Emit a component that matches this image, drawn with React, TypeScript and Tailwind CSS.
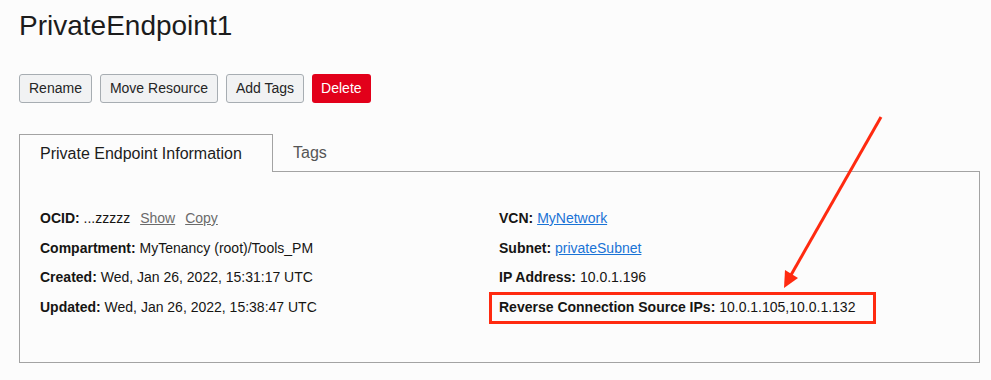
const font = { fontFamily: '"Liberation Sans", Arial, sans-serif' };

function Field({ label, children }: { label: string; children: React.ReactNode }) {
  return (
    <div className="h-[29.5px] leading-[29.5px] whitespace-nowrap">
      <span className="font-bold">{label}</span> {children}
    </div>
  );
}

export default function App() {
  return (
    <div className="relative h-[380px] w-[991px] overflow-hidden bg-[#fcfcfc] text-[#161513]" style={font}>
      <div className="pl-[19px] pr-[11px] pt-[9px]">
        <h1 className="text-[28px] leading-[34px] font-normal text-[#1c1c1c]">PrivateEndpoint1</h1>

        <div className="mt-[31px] flex gap-2 text-[14px]">
          <button className="h-[29px] rounded-[3px] border border-[#a7adb2] bg-[#f1f2f3] px-[9px] text-[#252525]">Rename</button>
          <button className="h-[29px] rounded-[3px] border border-[#a7adb2] bg-[#f1f2f3] px-[9px] text-[#252525]">Move Resource</button>
          <button className="h-[29px] rounded-[3px] border border-[#a7adb2] bg-[#f1f2f3] px-[9px] text-[#252525]">Add Tags</button>
          <button className="h-[29px] rounded-[3px] bg-[#e2001a] px-[9px] text-white">Delete</button>
        </div>

        <div className="mt-[31px] flex items-stretch">
          <div className="flex h-[38px] w-[254px] items-center border-x border-t border-[#a3a3a3] bg-[#fcfcfc] pl-[20px] pt-[1px] text-[16px] text-[#1c1c1c]">
            Private Endpoint Information
          </div>
          <div className="flex flex-1 items-center border-b border-[#a3a3a3] pl-[20px] pt-[1px] text-[16px] text-[#555]">
            Tags
          </div>
        </div>

        <div className="grid h-[191px] grid-cols-[459px_1fr] border-x border-b border-[#a3a3a3] pl-[20px] pt-[32px] text-[14px]">
          <div>
            <Field label="OCID:">
              ...zzzzz{" "}
              <a className="ml-[6px] text-[#6b6b6b] underline">Show</a>
              <a className="ml-[10px] text-[#6b6b6b] underline">Copy</a>
            </Field>
            <Field label="Compartment:">MyTenancy (root)/Tools_PM</Field>
            <Field label="Created:">Wed, Jan 26, 2022, 15:31:17 UTC</Field>
            <Field label="Updated:">Wed, Jan 26, 2022, 15:38:47 UTC</Field>
          </div>
          <div>
            <Field label="VCN:">
              <a className="text-[#1a73d6] underline">MyNetwork</a>
            </Field>
            <Field label="Subnet:">
              <a className="text-[#1a73d6] underline">privateSubnet</a>
            </Field>
            <Field label="IP Address:">10.0.1.196</Field>
            <div className="relative">
              <Field label="Reverse Connection Source IPs:">10.0.1.105,10.0.1.132</Field>
              <span className="absolute left-[-10px] top-[-1px] h-[32px] w-[387px] border-[3px] border-[#ff2a10]" />
            </div>
          </div>
        </div>
      </div>

      <svg className="pointer-events-none absolute left-0 top-0" width="991" height="380">
        <line x1="881" y1="117" x2="791" y2="275" stroke="#ff2a10" strokeWidth="3" />
        <polygon points="784,288 785,270 798,278" fill="#ff2a10" />
      </svg>
    </div>
  );
}
